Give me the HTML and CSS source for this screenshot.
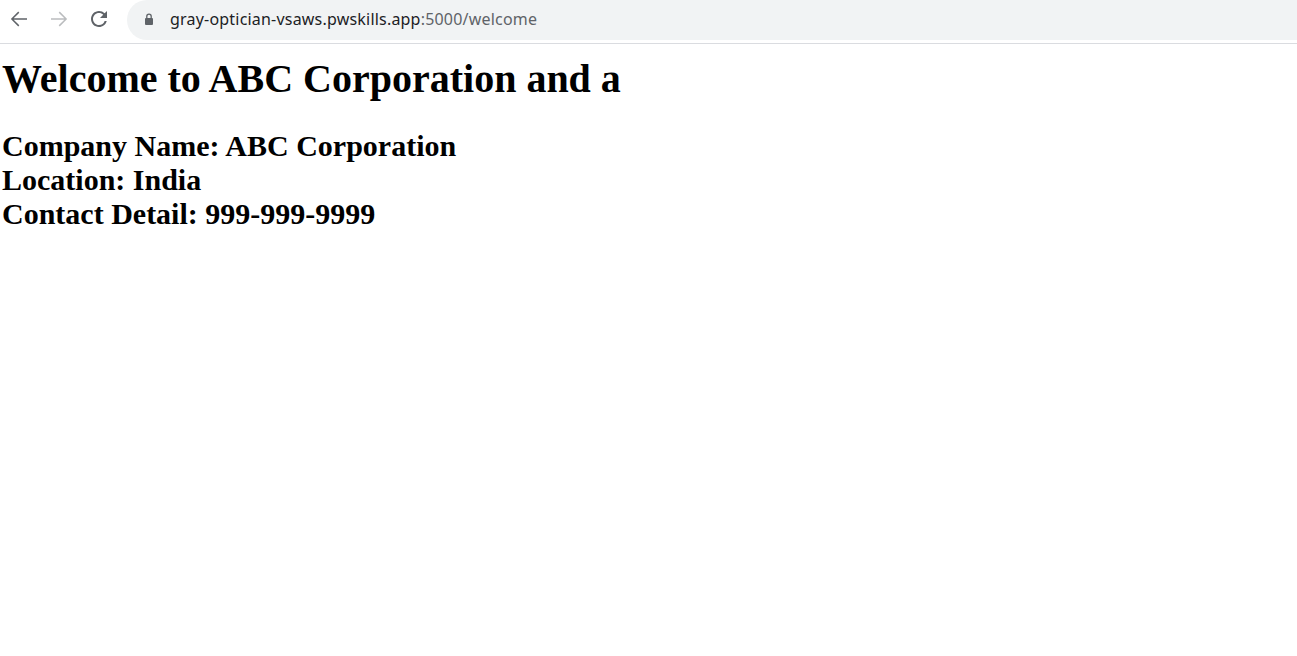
FILE: index.html
```html
<!DOCTYPE html>
<html>
<head>
<meta charset="utf-8">
<title>welcome</title>
<link rel="stylesheet" href="styles.css">
</head>
<body>
<header class="toolbar">
  <div class="nav">
    <span class="nav-btn">
      <svg width="24" height="24" viewBox="0 0 24 24"><path d="M20 11.25H6.7l5.6-5.6L11.25 4.6 3.85 12l7.4 7.4 1.05-1.05-5.6-5.6H20z" fill="#5f6368"/></svg>
    </span>
    <span class="nav-btn">
      <svg width="24" height="24" viewBox="0 0 24 24"><path d="M4 11.25h13.3l-5.6-5.6 1.05-1.05 7.4 7.4-7.4 7.4-1.05-1.05 5.6-5.6H4z" fill="#babcbe"/></svg>
    </span>
    <span class="nav-btn">
      <svg width="24" height="24" viewBox="0 0 24 24"><path d="M17.65 6.35A7.958 7.958 0 0 0 12 4c-4.42 0-7.99 3.58-7.99 8s3.57 8 7.99 8c3.73 0 6.84-2.55 7.73-6h-2.08A5.99 5.99 0 0 1 12 18c-3.31 0-6-2.69-6-6s2.69-6 6-6c1.66 0 3.14.69 4.22 1.78L13 11h7V4l-2.35 2.35z" fill="#5f6368"/></svg>
    </span>
  </div>
  <div class="omnibox">
    <svg class="lock" width="8" height="12" viewBox="0 0 8 12"><path d="M1.8 5.2V3.3a2.2 2.2 0 0 1 4.4 0v1.9" fill="none" stroke="#5f6368" stroke-width="1.3"/><rect x="0" y="5" width="8" height="7" rx="1" fill="#5f6368"/></svg>
    <span class="url"><span class="host">gray-optician-vsaws.pwskills.app</span><span class="path">:5000/welcome</span></span>
  </div>
</header>
<main class="page">
  <h1 class="title">Welcome to ABC Corporation and a</h1>
  <h2 class="details">Company Name: ABC Corporation<br>Location: India<br>Contact Detail: 999-999-9999</h2>
</main>
</body>
</html>
```
FILE: styles.css
```css
html, body {
  margin: 0;
  padding: 0;
  background: #ffffff;
}
.toolbar {
  display: flex;
  align-items: flex-start;
  height: 40px;
  padding-bottom: 3px;
  border-bottom: 1px solid #dadce0;
}
.nav {
  display: flex;
  align-items: center;
  gap: 16px;
  padding-left: 7px;
  width: 120px;
  height: 38px;
}
.nav-btn {
  display: flex;
  width: 24px;
  height: 24px;
}
.omnibox {
  flex: 1;
  height: 40px;
  box-sizing: border-box;
  padding: 0 0 2px 18px;
  display: flex;
  align-items: center;
  background: #f1f3f4;
  border-radius: 20px 0 0 20px;
}
.lock {
  margin-right: 17px;
}
.url {
  font-family: "Noto Sans", "Open Sans", sans-serif;
  font-size: 16px;
  letter-spacing: 0.2px;
}
.host { color: #202124; }
.path { color: #5f6368; }
.page {
  padding: 0 2px;
  font-family: "Liberation Serif", "Times New Roman", serif;
  color: #000;
}
.title {
  font-size: 40px;
  line-height: 46px;
  margin: 12px 0 0 0;
  font-weight: bold;
}
.details {
  font-size: 30px;
  line-height: 34px;
  margin: 27px 0 0 0;
  font-weight: bold;
}
```
